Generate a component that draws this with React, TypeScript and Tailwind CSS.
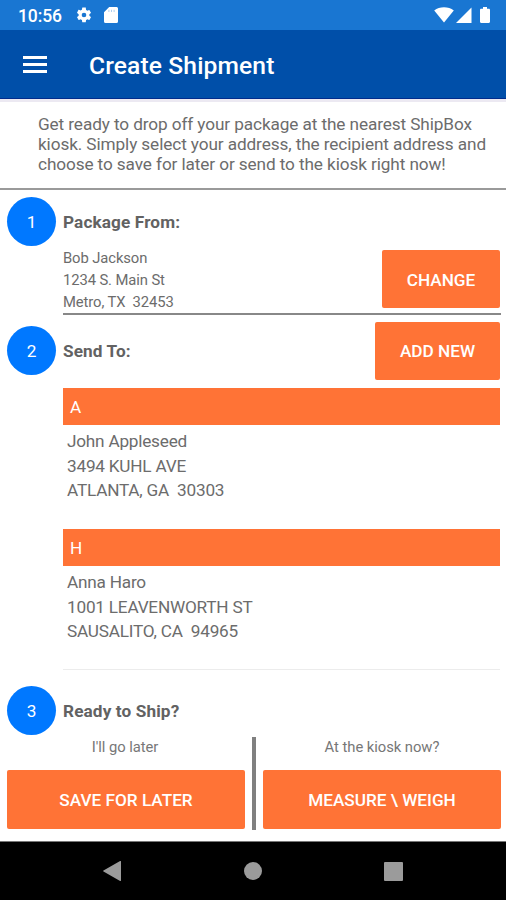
import type { ReactNode } from "react";
import clsx from "clsx";

interface Contact {
  letter: string;
  lines: string[];
}

const sender = ["Bob Jackson", "1234 S. Main St", "Metro, TX  32453"];

const contacts: Contact[] = [
  { letter: "A", lines: ["John Appleseed", "3494 KUHL AVE", "ATLANTA, GA  30303"] },
  { letter: "H", lines: ["Anna Haro", "1001 LEAVENWORTH ST", "SAUSALITO, CA  94965"] },
];

function StatusBar() {
  return (
    <div className="flex h-[30px] items-center bg-[#1976d2] pl-[18px] pr-[16px] text-white">
      <span className="w-[57px] pt-[3px] text-[17.5px] font-medium leading-none tracking-[-0.1px]">10:56</span>
      <svg width="18" height="18" viewBox="0 0 24 24" fill="currentColor">
        <path d="M19.14 12.94c.04-.3.06-.61.06-.94s-.02-.64-.07-.94l2.03-1.58a.49.49 0 0 0 .12-.61l-1.92-3.32a.49.49 0 0 0-.59-.22l-2.39.96a7 7 0 0 0-1.62-.94l-.36-2.54A.48.48 0 0 0 13.92 2h-3.84a.48.48 0 0 0-.47.41l-.36 2.54a7.3 7.3 0 0 0-1.62.94l-2.39-.96a.48.48 0 0 0-.59.22L2.74 8.87a.48.48 0 0 0 .12.61l2.03 1.58a7.5 7.5 0 0 0 0 1.88l-2.03 1.58a.49.49 0 0 0-.12.61l1.92 3.32c.12.22.37.29.59.22l2.39-.96c.5.38 1.03.7 1.62.94l.36 2.54c.05.24.24.41.48.41h3.84c.24 0 .44-.17.47-.41l.36-2.54a7.3 7.3 0 0 0 1.62-.94l2.39.96c.22.08.47 0 .59-.22l1.92-3.32a.48.48 0 0 0-.12-.61zM12 15.1a3.1 3.1 0 1 1 0-6.2 3.1 3.1 0 0 1 0 6.2z" />
      </svg>
      <svg className="ml-[11px]" width="14" height="16" viewBox="0 0 14 16" fill="currentColor">
        <path d="M5.2 0h7.1A1.6 1.6 0 0 1 14 1.6v12.8a1.6 1.6 0 0 1-1.6 1.6H1.6A1.6 1.6 0 0 1 0 14.4V5.2z" />
        <path d="M4.9 2.8v2.2M7.5 2.8v2.2M10.1 2.8v2.2" stroke="#1976d2" strokeWidth="1" opacity="0.35" />
      </svg>
      <svg className="ml-auto" width="20" height="16" viewBox="0 0 20 16" fill="currentColor">
        <path d="M10 15.400.2 3.400C3 1.200 6.300.2 10 .2s7 1 9.800 3.200z" />
      </svg>
      <svg className="ml-[2px]" width="16" height="16" viewBox="0 0 16 16" fill="currentColor">
        <path d="M0 16 15.500.5V16z" />
      </svg>
      <svg className="ml-[8px]" width="10" height="16" viewBox="0 0 10 16" fill="currentColor">
        <path d="M3 0h4v1.700h1.800c.7 0 1.200.5 1.200 1.200v11.900c0 .7-.5 1.200-1.200 1.200H1.200C.5 16 0 15.500 0 14.800V2.900c0-.7.5-1.200 1.200-1.200H3z" />
      </svg>
    </div>
  );
}

function AppBar() {
  return (
    <header className="flex h-[69px] items-center border-b border-[#012c8c] bg-[#004fa9] pl-[23px] text-white">
      <button type="button" aria-label="Menu" className="flex w-[24px] flex-col gap-[4px]">
        <span className="h-[3px] w-full bg-white" />
        <span className="h-[3px] w-full bg-white" />
        <span className="h-[3px] w-full bg-white" />
      </button>
      <h1 className="ml-[42px] pt-[5px] text-[24.6px] font-medium leading-none tracking-[0.13px]">Create Shipment</h1>
    </header>
  );
}

function StepHeading({ step, children }: { step: number; children: ReactNode }) {
  return (
    <div className="flex h-[49px] items-center pl-[7px]">
      <span className="flex size-[49px] shrink-0 items-center justify-center rounded-full bg-[#0078ff] pt-[2px] text-[17.2px] text-white">
        {step}
      </span>
      <h2 className="ml-[7px] pt-[3px] text-[17.2px] font-bold tracking-[0.12px] text-[#626262]">{children}</h2>
    </div>
  );
}

function ActionButton({ className, children }: { className?: string; children: ReactNode }) {
  return (
    <button
      type="button"
      className={clsx(
        "flex items-center justify-center rounded-[2px] bg-[#ff7336] pt-[3px] text-[17.2px] font-medium text-white",
        className,
      )}
    >
      {children}
    </button>
  );
}

function ContactGroup({ letter, lines }: Contact) {
  return (
    <div className="h-[141px]">
      <div className="flex h-[37px] items-center bg-[#ff7336] pl-[7px] pt-[2px] text-[17.2px] text-white">{letter}</div>
      <div className="whitespace-pre pl-[4px] pt-[4px] text-[17.2px] leading-[24.5px] tracking-[-0.22px] text-[#6c6c6c]">
        {lines.map((line) => (
          <p key={line}>{line}</p>
        ))}
      </div>
    </div>
  );
}

function NavBar() {
  return (
    <nav className="mt-auto flex h-[59px] items-center justify-between border-t border-[#777] bg-black pl-[102px] pr-[103px]">
      <svg width="20" height="20" viewBox="0 0 20 20" fill="#9b9b9b">
        <path d="M19 .5v19a.6.6 0 0 1-.9.400L1.500 10.500a.6.6 0 0 1 0-1L18.100.1a.6.6 0 0 1 .9.400z" />
      </svg>
      <span className="size-[18px] rounded-full bg-[#9b9b9b]" />
      <span className="size-[19px] rounded-[1px] bg-[#9b9b9b]" />
    </nav>
  );
}

export default function App() {
  return (
    <div className="flex h-[900px] w-[506px] flex-col overflow-hidden bg-white font-['Roboto',sans-serif]">
      <StatusBar />
      <AppBar />

      <p className="h-[91px] whitespace-pre-line border-b-2 border-t-3 border-b-[#9a9a9a] border-t-[#ece9f2] pl-[38px] pt-[12px] text-[17.2px] leading-[20.2px] tracking-[-0.1px] text-[#6c6c6c]">
        {"Get ready to drop off your package at the nearest ShipBox\nkiosk. Simply select your address, the recipient address and\nchoose to save for later or send to the kiosk right now!"}
      </p>

      <section className="h-[125px] pt-[7px]">
        <StepHeading step={1}>Package From:</StepHeading>
        <div className="ml-[63px] mr-[5px] flex h-[69px] justify-between border-b-2 border-[#888]">
          <div className="whitespace-pre pt-px text-[14.8px] leading-[22px] tracking-[-0.1px] text-[#6c6c6c]">
            {sender.map((line) => (
              <p key={line}>{line}</p>
            ))}
          </div>
          <ActionButton className="mr-px mt-[4px] h-[58px] w-[118px]">CHANGE</ActionButton>
        </div>
      </section>

      <section className="h-[355px]">
        <div className="flex h-[73px] items-center justify-between pb-[2px] pr-[6px]">
          <StepHeading step={2}>Send To:</StepHeading>
          <ActionButton className="h-[58px] w-[125px]">ADD NEW</ActionButton>
        </div>
        <div className="ml-[63px] mr-[6px] h-[282px] border-b border-[#ececec]">
          {contacts.map((contact) => (
            <ContactGroup key={contact.letter} {...contact} />
          ))}
        </div>
      </section>

      <section className="pt-[16px]">
        <StepHeading step={3}>Ready to Ship?</StepHeading>
        <div className="flex pl-[7px] pr-[5px] pt-px">
          <div className="w-[238px]">
            <p className="h-[34px] pr-[2px] text-center text-[14.8px] leading-[22px] tracking-[-0.05px] text-[#777]">I'll go later</p>
            <ActionButton className="h-[59px] w-full">SAVE FOR LATER</ActionButton>
          </div>
          <div className="ml-[7px] mt-px h-[93px] w-[4px] bg-[#808080]" />
          <div className="ml-auto w-[238px]">
            <p className="h-[34px] text-center text-[14.8px] leading-[22px] tracking-[-0.05px] text-[#777]">At the kiosk now?</p>
            <ActionButton className="h-[59px] w-full">MEASURE \ WEIGH</ActionButton>
          </div>
        </div>
      </section>

      <NavBar />
    </div>
  );
}
